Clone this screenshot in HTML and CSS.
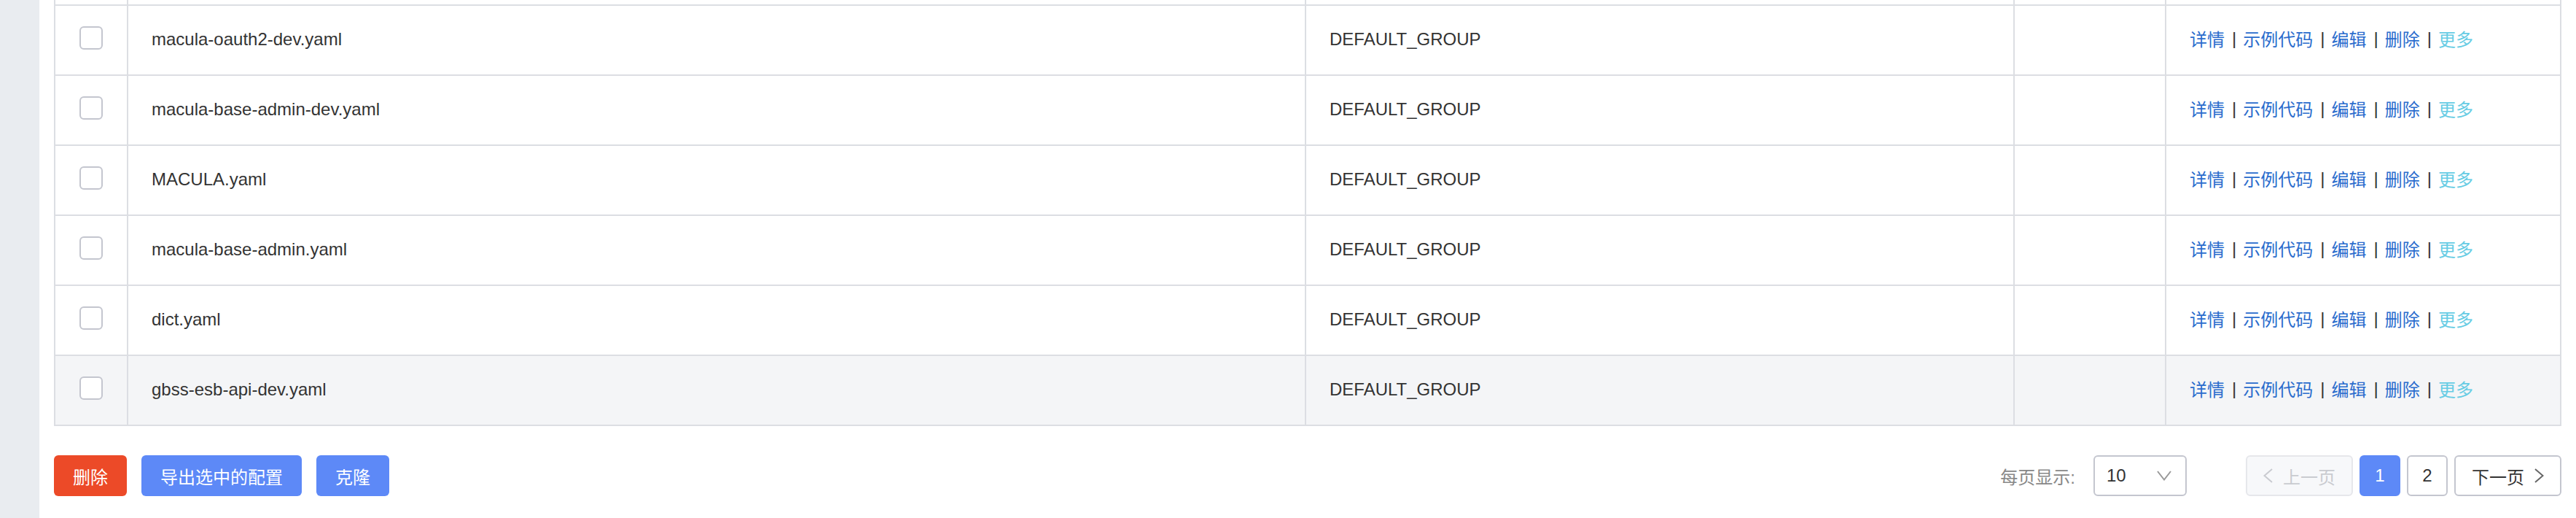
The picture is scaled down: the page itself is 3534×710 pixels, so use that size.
FILE: index.html
```html
<!DOCTYPE html>
<html lang="zh-CN">
<head>
<meta charset="utf-8">
<title>配置列表</title>
<link rel="stylesheet" href="styles.css">
</head>
<body>
<div class="layout">
  <aside class="sidebar"></aside>
  <main class="main">
    <div class="table">
      <div class="row stub">
        <div class="cell"></div><div class="cell"></div><div class="cell"></div><div class="cell"></div><div class="cell"></div>
      </div>
      <div class="row">
        <div class="cell check"><span class="checkbox"></span></div>
        <div class="cell">macula-oauth2-dev.yaml</div>
        <div class="cell">DEFAULT_GROUP</div>
        <div class="cell"></div>
        <div class="cell actions"><a class="link">详情</a><span class="sep">|</span><a class="link">示例代码</a><span class="sep">|</span><a class="link">编辑</a><span class="sep">|</span><a class="link">删除</a><span class="sep">|</span><a class="link more">更多</a></div>
      </div>
      <div class="row">
        <div class="cell check"><span class="checkbox"></span></div>
        <div class="cell">macula-base-admin-dev.yaml</div>
        <div class="cell">DEFAULT_GROUP</div>
        <div class="cell"></div>
        <div class="cell actions"><a class="link">详情</a><span class="sep">|</span><a class="link">示例代码</a><span class="sep">|</span><a class="link">编辑</a><span class="sep">|</span><a class="link">删除</a><span class="sep">|</span><a class="link more">更多</a></div>
      </div>
      <div class="row">
        <div class="cell check"><span class="checkbox"></span></div>
        <div class="cell">MACULA.yaml</div>
        <div class="cell">DEFAULT_GROUP</div>
        <div class="cell"></div>
        <div class="cell actions"><a class="link">详情</a><span class="sep">|</span><a class="link">示例代码</a><span class="sep">|</span><a class="link">编辑</a><span class="sep">|</span><a class="link">删除</a><span class="sep">|</span><a class="link more">更多</a></div>
      </div>
      <div class="row">
        <div class="cell check"><span class="checkbox"></span></div>
        <div class="cell">macula-base-admin.yaml</div>
        <div class="cell">DEFAULT_GROUP</div>
        <div class="cell"></div>
        <div class="cell actions"><a class="link">详情</a><span class="sep">|</span><a class="link">示例代码</a><span class="sep">|</span><a class="link">编辑</a><span class="sep">|</span><a class="link">删除</a><span class="sep">|</span><a class="link more">更多</a></div>
      </div>
      <div class="row">
        <div class="cell check"><span class="checkbox"></span></div>
        <div class="cell">dict.yaml</div>
        <div class="cell">DEFAULT_GROUP</div>
        <div class="cell"></div>
        <div class="cell actions"><a class="link">详情</a><span class="sep">|</span><a class="link">示例代码</a><span class="sep">|</span><a class="link">编辑</a><span class="sep">|</span><a class="link">删除</a><span class="sep">|</span><a class="link more">更多</a></div>
      </div>
      <div class="row hover">
        <div class="cell check"><span class="checkbox"></span></div>
        <div class="cell">gbss-esb-api-dev.yaml</div>
        <div class="cell">DEFAULT_GROUP</div>
        <div class="cell"></div>
        <div class="cell actions"><a class="link">详情</a><span class="sep">|</span><a class="link">示例代码</a><span class="sep">|</span><a class="link">编辑</a><span class="sep">|</span><a class="link">删除</a><span class="sep">|</span><a class="link more">更多</a></div>
      </div>
    </div>

    <div class="footer">
      <div class="btn-group">
        <button class="btn btn-danger">删除</button>
        <button class="btn btn-primary">导出选中的配置</button>
        <button class="btn btn-primary">克隆</button>
      </div>
      <div class="pager">
        <span class="size-label">每页显示:</span>
        <div class="select">
          <span class="select-value">10</span>
          <svg class="select-arrow" width="20" height="14" viewBox="0 0 20 14"><polyline points="1,1 10,12.5 19,1" fill="none" stroke="#999" stroke-width="2"/></svg>
        </div>
        <div class="pages">
          <button class="page nav disabled"><svg width="13" height="20" viewBox="0 0 13 20"><polyline points="12,1 1.5,10 12,19" fill="none" stroke="#c9cbd0" stroke-width="2"/></svg><span>上一页</span></button>
          <button class="page num current">1</button>
          <button class="page num">2</button>
          <button class="page nav"><span>下一页</span><svg width="13" height="20" viewBox="0 0 13 20"><polyline points="1,1 11.5,10 1,19" fill="none" stroke="#666" stroke-width="2"/></svg></button>
        </div>
      </div>
    </div>
  </main>
</div>
</body>
</html>
```
FILE: styles.css
```css
* { box-sizing: border-box; }

html, body {
  margin: 0;
  padding: 0;
  background: #ffffff;
  font-family: "Liberation Sans", "Noto Sans CJK SC", sans-serif;
  font-size: 24px;
  color: #333333;
}

.layout {
  display: flex;
  min-height: 710px;
}

.sidebar {
  width: 54px;
  flex: 0 0 54px;
  background: #e9ecf0;
}

.main {
  flex: 1;
  padding: 0 20px;
  background: #ffffff;
}

.table {
  border-left: 2px solid #dcdee3;
}

.row {
  display: grid;
  grid-template-columns: 100px 1616px 972px 208px 542px;
  height: 96px;
}

.row.stub {
  height: 8px;
}

.row.hover {
  background: #f4f5f7;
}

.cell {
  border-right: 2px solid #dcdee3;
  border-bottom: 2px solid #dcdee3;
  padding: 0 32px 2px;
  display: flex;
  align-items: center;
  white-space: nowrap;
  overflow: hidden;
}

.row.stub .cell {
  padding: 0;
}

.cell.check {
  padding: 0 0 6px;
  justify-content: center;
}

.cell.actions {
  padding-bottom: 5px;
}

.checkbox {
  width: 32px;
  height: 32px;
  border: 2px solid #c4c6cf;
  border-radius: 6px;
  background: #ffffff;
}

.actions .link {
  color: #2a6ccd;
  text-decoration: none;
  cursor: pointer;
}

.actions .link.more {
  color: #66cce4;
}

.actions .sep {
  color: #333333;
  margin: 0 9px 0 10px;
}

.footer {
  margin-top: 40px;
  height: 56px;
  display: flex;
  justify-content: space-between;
  align-items: center;
}

.btn-group {
  display: flex;
  gap: 20px;
}

.btn {
  height: 56px;
  padding: 0 26px;
  border: 0;
  border-radius: 6px;
  font-family: inherit;
  font-size: 24px;
  color: #ffffff;
  cursor: pointer;
}

.btn-danger { background: #ec4a28; }
.btn-primary { background: #5d89f7; }

.pager {
  display: flex;
  align-items: center;
}

.size-label {
  color: #888888;
  margin-right: 25px;
}

.select {
  width: 128px;
  height: 56px;
  border: 2px solid #c4c6cf;
  border-radius: 6px;
  display: flex;
  align-items: center;
  justify-content: space-between;
  padding: 0 19px 0 16px;
  margin-right: 81px;
}

.select-value { color: #333333; }

.pages {
  display: flex;
  gap: 9px;
}

.page {
  height: 56px;
  border: 2px solid #c4c6cf;
  border-radius: 6px;
  background: #ffffff;
  font-family: inherit;
  font-size: 24px;
  color: #333333;
  display: flex;
  align-items: center;
  justify-content: center;
  padding: 0;
}

.page.num { width: 56px; }

.page.nav {
  width: 147px;
  gap: 14px;
}

.page.disabled {
  background: #f7f8fa;
  border-color: #e6e7eb;
  color: #c9cbd0;
}

.page.current {
  background: #5d89f7;
  border-color: #5d89f7;
  color: #ffffff;
}
```
